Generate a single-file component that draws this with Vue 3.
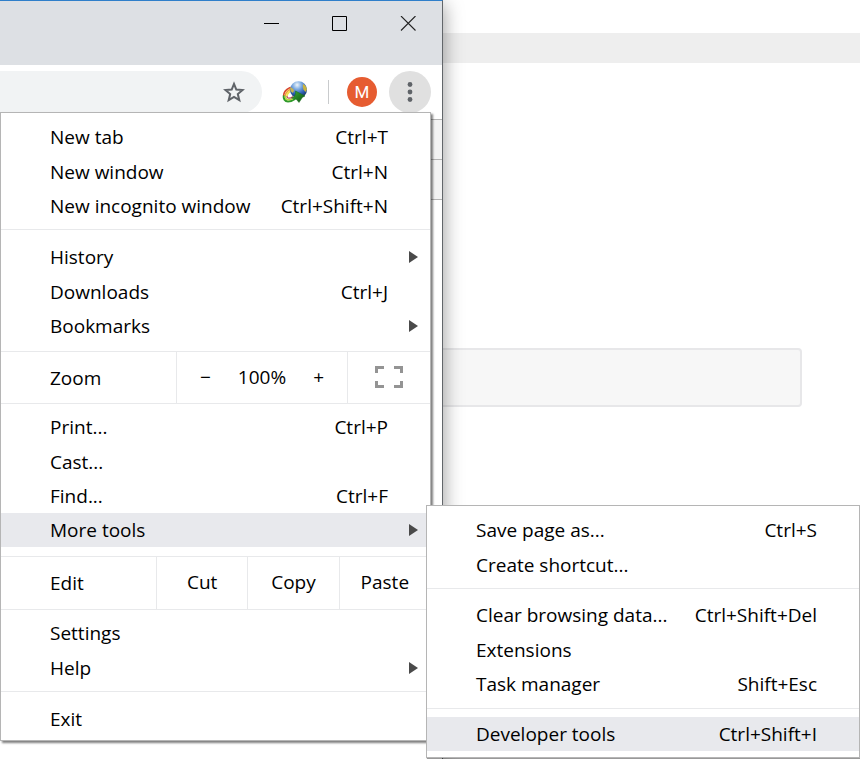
<script setup>
const mainTop = [
  [
    { label: 'New tab', keys: 'Ctrl+T' },
    { label: 'New window', keys: 'Ctrl+N' },
    { label: 'New incognito window', keys: 'Ctrl+Shift+N' },
  ],
  [
    { label: 'History', sub: true },
    { label: 'Downloads', keys: 'Ctrl+J' },
    { label: 'Bookmarks', sub: true },
  ],
]
const printGroup = [
  { label: 'Print...', keys: 'Ctrl+P' },
  { label: 'Cast...' },
  { label: 'Find...', keys: 'Ctrl+F' },
  { label: 'More tools', sub: true, active: true },
]
const settingsGroup = [{ label: 'Settings' }, { label: 'Help', sub: true }]
const toolGroups = [
  [
    { label: 'Save page as...', keys: 'Ctrl+S' },
    { label: 'Create shortcut...' },
  ],
  [
    { label: 'Clear browsing data...', keys: 'Ctrl+Shift+Del' },
    { label: 'Extensions' },
    { label: 'Task manager', keys: 'Shift+Esc' },
  ],
  [{ label: 'Developer tools', keys: 'Ctrl+Shift+I', active: true }],
]
</script>

<template>
  <main class="desktop">
    <section class="page">
      <div class="band"></div>
      <div class="code"></div>
    </section>

    <section class="window">
      <header class="titlebar">
        <button class="caption" aria-label="Minimize">
          <svg width="16" height="16" viewBox="0 0 16 16"><path d="M0 7.5h15" stroke="#000" /></svg>
        </button>
        <button class="caption" aria-label="Maximize">
          <svg width="16" height="16" viewBox="0 0 16 16"><path d="M.5 .5h14v14h-14z" fill="none" stroke="#000" /></svg>
        </button>
        <button class="caption" aria-label="Close">
          <svg width="16" height="16" viewBox="0 0 16 16"><path d="M1 0l14.500 14.500M15.500 0l-14.500 14.500" stroke="#222" stroke-width="1.1" /></svg>
        </button>
      </header>
      <div class="toolbar">
        <div class="omnibox">
          <input class="address" type="text" aria-label="Address" />
          <button class="star" aria-label="Bookmark this page">
            <svg width="22" height="22" viewBox="0 0 22 22">
              <path d="M11 2.800l2.300 5.700 6.300.5-4.800 4.100 1.500 6.100-5.300-3.300-5.300 3.300 1.500-6.100L2.400 9l6.300-.5z" fill="none" stroke="#5f6368" stroke-width="2" />
            </svg>
          </button>
        </div>
        <button class="extension" aria-label="Download manager">
          <svg width="26" height="24" viewBox="0 0 26 24">
            <defs>
              <radialGradient id="globe" cx=".42" cy=".22" r=".8">
                <stop offset="0" stop-color="#f0f6fa" />
                <stop offset=".3" stop-color="#86b2e4" />
                <stop offset=".65" stop-color="#2f62b8" />
                <stop offset="1" stop-color="#173156" />
              </radialGradient>
              <linearGradient id="arrow" x1="0" y1="0" x2="1" y2="1">
                <stop offset="0" stop-color="#3fae35" />
                <stop offset="1" stop-color="#0a4f12" />
              </linearGradient>
            </defs>
            <g fill="none" stroke-width="1.600">
              <path d="M13 7.500C7 6 1.500 11 1.700 16" stroke="#d6452f" />
              <path d="M13 9C8 7.700 3.200 12 3.300 16.500" stroke="#efa334" />
              <path d="M13 10.500C9 9.500 4.800 13 4.900 16.500" stroke="#efe34a" />
              <path d="M1.700 15.500c-.3 3 1 6 4.300 6 3 0 5-1 7-2.500" stroke="#2f9a2a" stroke-width="2" />
              <path d="M3.400 16c0 2.500 1 3.800 3 3.800s3.600-.6 5.600-2" stroke="#b7dc3e" />
              <path d="M5 16c0 1.500.8 2.300 2 2.200 1.500 0 3-.8 4-1.700" stroke="#c04a62" stroke-width="1.200" />
            </g>
            <circle cx="16.500" cy="9.700" r="8.500" fill="url(#globe)" />
            <path d="M21 4c2.300 1 3.800 3.200 3.900 5.700l-1.500 2.300-2-2.500-.6-3z" fill="#c9b440" />
            <path d="M8.500 7c1.500 1 3 1.500 3.500 3.500l-1 2.500-2-1.500c-.7-1.600-.9-3-.5-4.500z" fill="#c8b452" />
            <path d="M13.500 11l9.500 5-2.500 1.300-3.500 5.200-2.500-3-5-1.500c2.800-1 4.500-3 4-7z" fill="url(#arrow)" stroke="#176b1b" stroke-width=".5" />
          </svg>
        </button>
        <span class="divider"></span>
        <button class="avatar" aria-label="Profile M">M</button>
        <button class="kebab" aria-label="Menu">
          <svg width="6" height="20" viewBox="0 0 6 20" fill="#5f6368">
            <circle cx="3" cy="2.500" r="2.400" /><circle cx="3" cy="10" r="2.400" /><circle cx="3" cy="17.500" r="2.400" />
          </svg>
        </button>
      </div>
      <div class="strips">
        <div class="strip"></div>
        <div class="strip"></div>
      </div>
    </section>

    <nav class="menu main-menu" aria-label="Main menu">
      <div v-for="(group, g) in mainTop" :key="g" class="group">
        <button v-for="item in group" :key="item.label" class="row">
          <span>{{ item.label }}</span>
          <span v-if="item.keys" class="keys">{{ item.keys }}</span>
          <i v-if="item.sub" class="arrow"></i>
        </button>
      </div>
      <div class="split zoom">
        <span class="title">Zoom</span>
        <div class="zoom-level">
          <button aria-label="Zoom out">−</button>
          <span class="percent">100%</span>
          <button aria-label="Zoom in">+</button>
        </div>
        <button class="full" aria-label="Full screen">
          <svg width="28" height="22" viewBox="0 0 28 22" fill="none" stroke="#949494" stroke-width="3">
            <path d="M1.500 7V1.500H9M19 1.500h7.500V7M26.500 15v5.500H19M9 20.500H1.500V15" />
          </svg>
        </button>
      </div>
      <div class="group tight">
        <button v-for="item in printGroup" :key="item.label" class="row" :class="{ active: item.active }">
          <span>{{ item.label }}</span>
          <span v-if="item.keys" class="keys">{{ item.keys }}</span>
          <i v-if="item.sub" class="arrow"></i>
        </button>
      </div>
      <div class="split edit">
        <span class="title">Edit</span>
        <button>Cut</button>
        <button>Copy</button>
        <button>Paste</button>
      </div>
      <div class="group tight settings">
        <button v-for="item in settingsGroup" :key="item.label" class="row">
          <span>{{ item.label }}</span>
          <i v-if="item.sub" class="arrow"></i>
        </button>
      </div>
      <div class="group">
        <button class="row"><span>Exit</span></button>
      </div>
    </nav>

    <nav class="menu tools-menu" aria-label="More tools">
      <div v-for="(group, g) in toolGroups" :key="g" class="group">
        <button v-for="item in group" :key="item.label" class="row" :class="{ active: item.active }">
          <span>{{ item.label }}</span>
          <span v-if="item.keys" class="keys">{{ item.keys }}</span>
        </button>
      </div>
    </nav>
  </main>
</template>

<style>
body {
  margin: 0;
  background: #fff;
}
</style>

<style scoped>
.desktop {
  position: relative;
  min-height: 100vh;
  overflow: hidden;
  font-family: "Open Sans", "Noto Sans", sans-serif;
  font-size: 19px;
  color: #000;
}
button {
  font: inherit;
  color: inherit;
  background: none;
  border: 0;
  padding: 0;
  margin: 0;
}
.page {
  padding-top: 33px;
}
.band {
  height: 30px;
  background: #eee;
}
.code {
  box-sizing: border-box;
  height: 59px;
  margin: 285px 58px 0 0;
  background: #f7f7f7;
  border: 2px solid #e7e7e9;
  border-radius: 4px;
}
.window {
  position: absolute;
  top: 0;
  left: 0;
  bottom: 0;
  box-sizing: border-box;
  width: 443px;
  background: #fff;
  border-top: 1px solid #2f7fca;
  border-right: 1px solid #62666a;
  box-shadow: 1px 4px 18px rgba(0, 0, 0, 0.38);
}
.titlebar {
  display: flex;
  justify-content: flex-end;
  align-items: flex-start;
  gap: 52px;
  height: 49px;
  padding: 15px 26px 0 0;
  background: #dde0e4;
}
.caption,
.extension,
.kebab,
.star {
  display: flex;
  align-items: center;
  justify-content: center;
}
.toolbar {
  display: flex;
  align-items: center;
  height: 42px;
  padding: 6px 11px 6px 0;
}
.omnibox {
  display: flex;
  align-items: center;
  flex: 1;
  min-width: 0;
  height: 42px;
  padding-right: 17px;
  background: #f1f3f4;
  border-radius: 0 21px 21px 0;
}
.address {
  flex: 1;
  min-width: 0;
  border: 0;
  background: none;
  font: inherit;
}
.extension {
  flex: none;
  width: 26px;
  margin: 0 20px;
}
.divider {
  width: 1px;
  height: 24px;
  background: #c9cbcd;
}
.avatar {
  flex: none;
  width: 30px;
  height: 30px;
  margin: 0 12px 0 18px;
  border-radius: 50%;
  background: #e65c31;
  color: #fff;
  font-family: Roboto, sans-serif;
  font-size: 17px;
}
.kebab {
  flex: none;
  width: 42px;
  height: 42px;
  border-radius: 50%;
  background: #e0e0e0;
}
.strips {
  border-bottom: 1px solid #b4b4b4;
}
.strip {
  height: 39px;
  border-top: 1px solid #b4b4b4;
  background: #f3f3f3;
}
.menu {
  position: absolute;
  box-sizing: border-box;
  background: #fff;
  border: 1px solid #b5b5b5;
}
.main-menu {
  top: 112px;
  left: 0;
  width: 431px;
  box-shadow: 2px 2px 2px rgba(0, 0, 0, 0.5);
}
.tools-menu {
  top: 505px;
  left: 426px;
  right: 0;
  box-shadow: 1px 1px 1px rgba(0, 0, 0, 0.4);
}
.main-menu .group {
  padding: 10px 0 8px;
}
.tools-menu .group {
  padding: 9px 0 7px;
}
.menu .group:first-child {
  padding: 7px 0 6px;
}
.main-menu .group:last-child {
  padding-bottom: 4px;
}
.tools-menu .group:last-child {
  padding: 8px 0 6px;
}
.main-menu .group.tight {
  padding: 6px 0 9px;
}
.main-menu .group.settings {
  padding-bottom: 6px;
}
.group + .group,
.split,
.split + .group {
  border-top: 1px solid #e8e9eb;
}
.row {
  display: flex;
  align-items: center;
  width: 100%;
  height: 34px;
  padding: 0 12px 0 49px;
  text-align: left;
}
.row:nth-child(2) {
  height: 35px;
}
.row.active {
  background: #e8e9ed;
}
.keys {
  margin-left: auto;
  padding-right: 30px;
}
.arrow {
  width: 0;
  height: 0;
  margin-left: auto;
  border: 6px solid transparent;
  border-left: 9px solid #4a4a4a;
  border-right: 0;
}
.split {
  display: flex;
  height: 51px;
}
.split.edit {
  height: 52px;
}
.title {
  display: flex;
  align-items: center;
  padding-left: 49px;
}
.zoom .title {
  width: 126px;
}
.edit .title {
  width: 106px;
}
.split > :not(.title) {
  border-left: 1px solid #e8e9eb;
}
.zoom-level {
  display: flex;
  align-items: center;
  justify-content: center;
  gap: 27px;
  width: 170px;
}
.full {
  display: flex;
  flex: 1;
  align-items: center;
  justify-content: center;
}
.zoom-level,
.full,
.edit button {
  padding-bottom: 2px;
  box-sizing: border-box;
}
.zoom-level {
  width: 171px;
}
.edit button {
  flex: 1;
}
</style>
